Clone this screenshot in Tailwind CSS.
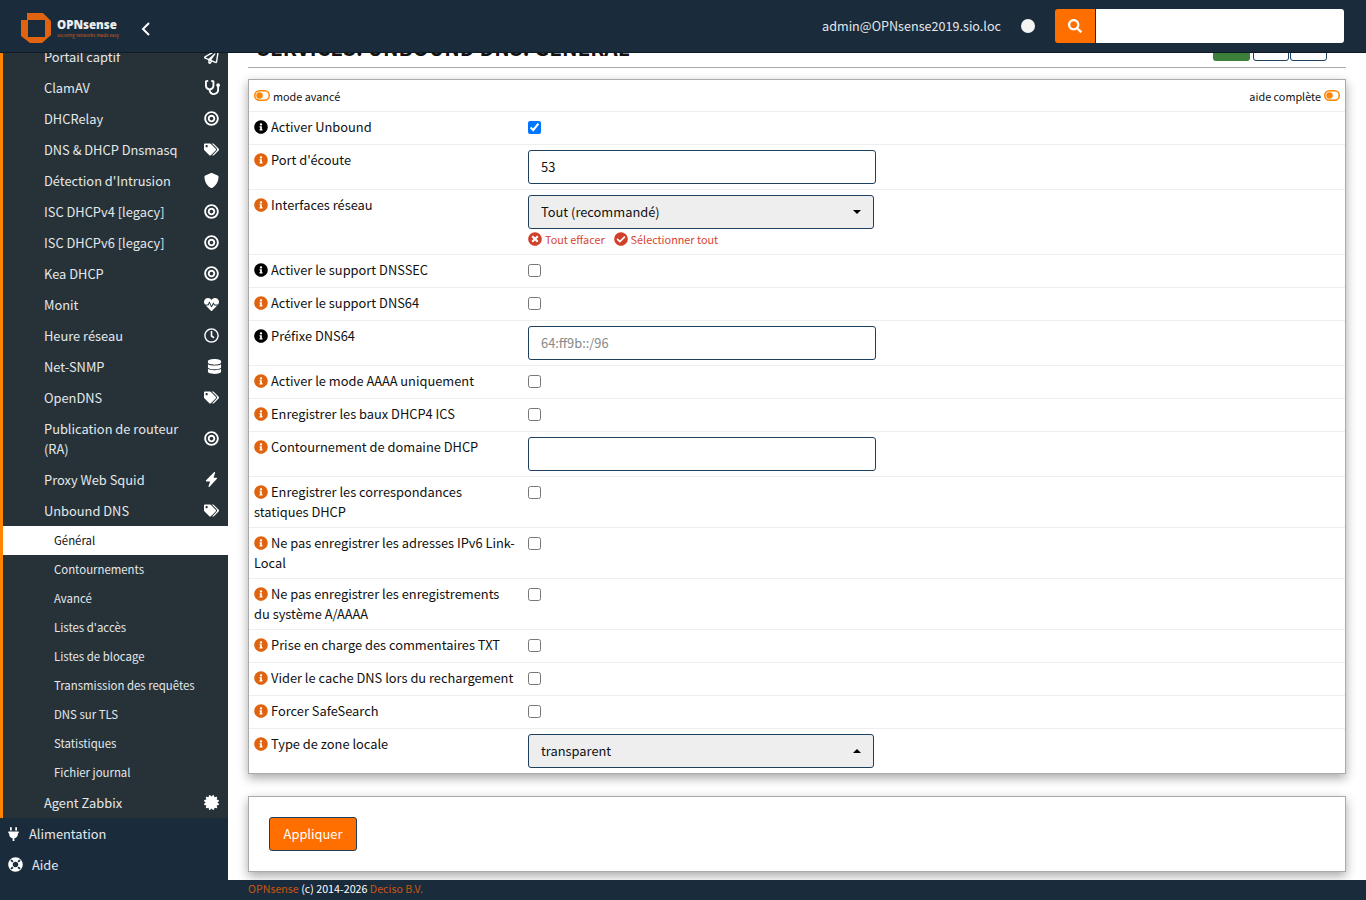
<!DOCTYPE html>
<html lang="fr">
<head>
    <meta charset="UTF-8">
    <title>Services: Unbound DNS: Général</title>
    <script src="https://cdn.jsdelivr.net/npm/@tailwindcss/browser@4"></script>
</head>
<body class="h-[900px] overflow-hidden bg-white text-[12.85px] leading-[20px] text-[#111] font-['Noto_Sans_CJK_SC',sans-serif]">
    <!-- icon sprite -->
    <svg class="hidden">
        <symbol id="i-plane" viewBox="0 0 512 512"><path d="M440 6.5L24 246.4c-34.4 19.9-31.1 70.8 5.7 85.9L144 379.6V464c0 46.4 59.2 65.5 86.6 28.6l43.8-59.1 111.9 46.2c5.9 2.4 12.1 3.6 18.3 3.6 8.2 0 16.3-2.1 23.6-6.2 12.8-7.2 21.6-20 23.9-34.5l59.4-387.2c6.1-40.1-36.9-68.8-71.5-48.9zM192 464v-64.6l36.6 15.1L192 464zm212.6-28.7l-153.8-63.5L391 169.5c10.7-15.5-9.5-33.5-23.7-21.2L155.8 332.6 48 288 464 48l-59.4 387.3z"/></symbol>
        <symbol id="i-steth" viewBox="0 0 512 512"><path d="M447.1 112c-34.2.5-62.3 28.4-63 62.6-.5 24.3 12.5 45.6 32 56.8V344c0 57.3-50.2 104-112 104-60 0-109.2-44.1-111.9-99.2C265 333.8 320 269.2 320 192V36.6c0-11.4-8.1-21.3-19.3-23.5L237.8.5c-13-2.6-25.6 5.8-28.2 18.8L206.4 35c-2.6 13 5.8 25.6 18.8 28.2l30.7 6.1v121.4c0 52.9-42.2 96.7-95.1 97.2-53.4.5-96.9-42.7-96.9-96V69.4l30.7-6.1c13-2.6 21.4-15.2 18.8-28.2l-3.1-15.7C107.7 6.4 95.1-2 82.1.6L19.3 13C8.1 15.3 0 25.1 0 36.6V192c0 77.3 55.1 142 128.1 156.8C130.7 439.2 208.6 512 304 512c97 0 176-75.4 176-168V231.4c19.1-11.1 32-31.7 32-55.4 0-35.7-29.2-64.5-64.9-64z"/></symbol>
        <symbol id="i-bullseye" viewBox="0 0 496 512"><path d="M248 8C111.03 8 0 119.03 0 256s111.03 248 248 248 248-111.03 248-248S384.97 8 248 8zm0 432c-101.69 0-184-82.29-184-184 0-101.69 82.29-184 184-184 101.69 0 184 82.29 184 184 0 101.69-82.29 184-184 184zm0-312c-70.69 0-128 57.31-128 128s57.31 128 128 128 128-57.31 128-128-57.31-128-128-128zm0 192c-35.29 0-64-28.71-64-64s28.71-64 64-64 64 28.71 64 64-28.71 64-64 64z"/></symbol>
        <symbol id="i-tags" viewBox="0 0 640 512"><path d="M497.941 225.941L286.059 14.059A48 48 0 0 0 252.118 0H48C21.49 0 0 21.49 0 48v204.118a48 48 0 0 0 14.059 33.941l211.882 211.882c18.744 18.745 49.136 18.746 67.882 0l204.118-204.118c18.745-18.745 18.745-49.137 0-67.882zM112 160c-26.51 0-48-21.49-48-48s21.49-48 48-48 48 21.49 48 48-21.49 48-48 48zm513.941 133.823L421.823 497.941c-18.745 18.745-49.137 18.745-67.882 0l-.36-.36L527.64 323.522c16.999-16.999 26.36-39.6 26.36-63.64s-9.362-46.641-26.36-63.64L331.397 0h48.721a48 48 0 0 1 33.941 14.059l211.882 211.882c18.745 18.745 18.745 49.137 0 67.882z"/></symbol>
        <symbol id="i-shield" viewBox="0 0 512 512"><path d="M466.5 83.7l-192-80a48.15 48.15 0 0 0-36.9 0l-192 80C27.7 91.1 16 108.6 16 128c0 198.5 114.5 335.7 221.5 380.3 11.8 4.9 25.1 4.9 36.9 0C360.1 472.6 496 349.3 496 128c0-19.4-11.7-36.9-29.5-44.3z"/></symbol>
        <symbol id="i-heart" viewBox="0 0 512 512"><path d="M320.2 243.8l-49.7 99.4c-6 12.1-23.4 11.7-28.9-.6l-56.9-126.3-30 71.7H60.6l182.5 186.5c7.1 7.3 18.6 7.3 25.7 0L451.4 288H342.3l-22.1-44.2zM473.7 73.9l-2.4-2.5c-51.5-52.6-135.8-52.6-187.4 0L256 100l-27.9-28.5c-51.5-52.7-135.9-52.7-187.4 0l-2.4 2.4C-10.4 123.7-12.5 203 31 256h102.4l35.9-86.2c5.4-12.9 23.6-13.2 29.4-.4l58.2 129.3 49-97.9c5.9-11.8 22.7-11.8 28.6 0l27.6 55.2H481c43.5-53 41.4-132.3-7.3-182.1z"/></symbol>
        <symbol id="i-clock" viewBox="0 0 512 512"><path d="M256 8C119 8 8 119 8 256s111 248 248 248 248-111 248-248S393 8 256 8zm0 448c-110.5 0-200-89.5-200-200S145.5 56 256 56s200 89.5 200 200-89.5 200-200 200zm61.8-104.4l-84.9-61.7c-3.1-2.3-4.9-5.9-4.9-9.7V116c0-6.6 5.4-12 12-12h32c6.6 0 12 5.4 12 12v141.7l66.8 48.6c5.4 3.9 6.5 11.4 2.6 16.8L334.6 349c-3.9 5.3-11.4 6.5-16.8 2.6z"/></symbol>
        <symbol id="i-db" viewBox="0 0 448 512"><path d="M448 73.143v45.714C448 159.143 347.667 192 224 192S0 159.143 0 118.857V73.143C0 32.857 100.333 0 224 0s224 32.857 224 73.143zM448 176v102.857C448 319.143 347.667 352 224 352S0 319.143 0 278.857V176c48.125 33.143 136.208 48.572 224 48.572S399.874 209.143 448 176zm0 160v102.857C448 479.143 347.667 512 224 512S0 479.143 0 438.857V336c48.125 33.143 136.208 48.572 224 48.572S399.874 369.143 448 336z"/></symbol>
        <symbol id="i-bolt" viewBox="0 0 384 512"><path d="M296 0c14 0 24 13 20 27L262 192h98c20 0 31 23 18 38L125 505c-15 15-40 1-34-20l54-165H24c-20 0-31-23-18-38L277 8c5-5 12-8 19-8z"/></symbol>
        <symbol id="i-cert" viewBox="0 0 512 512"><path d="M458.622 255.92l45.985-45.005c13.708-12.977 7.316-36.039-10.664-40.339l-62.65-15.99 17.661-62.015c4.991-17.838-11.829-34.663-29.661-29.671l-61.994 17.667-15.984-62.671C337.085.197 313.765-6.276 301.079 7.228L256 53.57 210.921 7.229c-12.58-13.391-36.04-7.186-40.236 10.668l-15.984 62.671-61.995-17.667C74.87 57.907 58.056 74.738 63.046 92.572l17.661 62.015-62.65 15.99C.069 174.878-6.31 197.944 7.392 210.915l45.985 45.005-45.985 45.004c-13.708 12.977-7.316 36.039 10.664 40.339l62.65 15.99-17.661 62.015c-4.991 17.838 11.829 34.663 29.661 29.671l61.994-17.667 15.984 62.671c4.439 18.575 27.696 24.018 40.237 10.668L256 458.61l45.079 46.343c12.381 13.523 35.728 7.929 40.237-10.668l15.984-62.671 61.994 17.667c17.833 4.992 34.652-11.837 29.661-29.671l-17.661-62.015 62.65-15.99c17.98-4.3 24.371-27.362 10.664-40.339l-45.986-45.006z"/></symbol>
        <symbol id="i-plug" viewBox="0 0 384 512"><path d="M320,32a32,32,0,0,0-64,0v96h64Zm48,128H16A16,16,0,0,0,0,176v32a16,16,0,0,0,16,16H32v32A160.07,160.07,0,0,0,160,412.8V512h64V412.8A160.07,160.07,0,0,0,352,256V224h16a16,16,0,0,0,16-16V176A16,16,0,0,0,368,160ZM128,32a32,32,0,0,0-64,0v96h64Z"/></symbol>
        <symbol id="i-ring" viewBox="0 0 512 512"><path d="M256 8C119.033 8 8 119.033 8 256s111.033 248 248 248 248-111.033 248-248S392.967 8 256 8zm173.696 119.559l-63.399 63.399c-10.987-18.559-26.67-34.252-45.255-45.255l63.399-63.399a218.396 218.396 0 0 1 45.255 45.255zM256 352c-53.019 0-96-42.981-96-96s42.981-96 96-96 96 42.981 96 96-42.981 96-96 96zM127.559 82.304l63.399 63.399c-18.559 10.987-34.252 26.67-45.255 45.255l-63.399-63.399a218.372 218.372 0 0 1 45.255-45.255zM82.304 384.441l63.399-63.399c10.987 18.559 26.67 34.252 45.255 45.255l-63.399 63.399a218.396 218.396 0 0 1-45.255-45.255zm302.137 45.255l-63.399-63.399c18.559-10.987 34.252-26.67 45.255-45.255l63.399 63.399a218.403 218.403 0 0 1-45.255 45.255z"/></symbol>
        <symbol id="i-search" viewBox="0 0 512 512"><path d="M505 442.7L405.3 343c-4.5-4.5-10.6-7-17-7H372c27.6-35.3 44-79.7 44-128C416 93.1 322.9 0 208 0S0 93.1 0 208s93.1 208 208 208c48.3 0 92.7-16.4 128-44v16.3c0 6.4 2.5 12.5 7 17l99.7 99.7c9.4 9.4 24.6 9.4 33.9 0l28.3-28.3c9.4-9.4 9.4-24.6.1-34zM208 336c-70.7 0-128-57.2-128-128 0-70.7 57.2-128 128-128 70.7 0 128 57.2 128 128 0 70.7-57.2 128-128 128z"/></symbol>
        <symbol id="i-info" viewBox="0 0 512 512"><path d="M256 8C119.043 8 8 119.083 8 256c0 136.997 111.043 248 248 248s248-111.003 248-248C504 119.083 392.957 8 256 8zm0 110c23.196 0 42 18.804 42 42s-18.804 42-42 42-42-18.804-42-42 18.804-42 42-42zm56 254c0 6.627-5.373 12-12 12h-88c-6.627 0-12-5.373-12-12v-24c0-6.627 5.373-12 12-12h12v-64h-12c-6.627 0-12-5.373-12-12v-24c0-6.627 5.373-12 12-12h64c6.627 0 12 5.373 12 12v100h12c6.627 0 12 5.373 12 12v24z"/></symbol>
        <symbol id="i-times" viewBox="0 0 512 512"><path d="M256 8C119 8 8 119 8 256s111 248 248 248 248-111 248-248S393 8 256 8zm121.6 313.1c4.7 4.7 4.7 12.3 0 17L338 377.6c-4.7 4.7-12.3 4.7-17 0L256 312l-65.1 65.6c-4.7 4.7-12.3 4.7-17 0L134.4 338c-4.7-4.7-4.7-12.3 0-17l65.6-65-65.6-65.1c-4.7-4.7-4.7-12.3 0-17l39.6-39.6c4.7-4.7 12.3-4.7 17 0l65 65.7 65.1-65.6c4.7-4.7 12.3-4.7 17 0l39.6 39.6c4.7 4.7 4.7 12.3 0 17L312 256l65.6 65.1z"/></symbol>
        <symbol id="i-check" viewBox="0 0 512 512"><path d="M504 256c0 136.967-111.033 248-248 248S8 392.967 8 256 119.033 8 256 8s248 111.033 248 248zM227.314 387.314l184-184c6.248-6.248 6.248-16.379 0-22.627l-22.627-22.627c-6.248-6.249-16.379-6.249-22.628 0L216 308.118l-70.059-70.059c-6.248-6.248-16.379-6.248-22.628 0l-22.627 22.627c-6.248 6.248-6.248 16.379 0 22.627l104 104c6.249 6.249 16.379 6.249 22.628.001z"/></symbol>
        <symbol id="i-toggle" viewBox="0 0 16 11"><rect x="0.75" y="0.75" width="14.5" height="9.5" rx="4.75" fill="none" stroke="currentColor" stroke-width="1.5"/><circle cx="5.5" cy="5.5" r="3.2" fill="currentColor"/></symbol>
    </svg>

    <div class="flex h-[900px] flex-col">
        <!-- top bar -->
        <header class="relative z-10 flex h-[53px] shrink-0 items-center border-b border-[#0e1a24] bg-[#1a2b3b] pr-[22px]">
            <div class="mt-[4px] flex w-[228px] items-center pl-[21px]">
                <svg class="h-[30px] w-[30px] shrink-0" viewBox="0 0 30 30"><path fill="#e0640f" fill-rule="evenodd" d="M6 0h16l8 8v14l-9 8H9l-9-7V7h6zM7 7v17h17V7z"/></svg>
                <div class="ml-[6px] flex w-[64px] flex-col">
                    <span class="text-[11.5px] leading-[13px] font-extrabold text-[#eee] font-['Open_Sans',sans-serif]">OPNsense</span>
                    <span class="mt-[1px] whitespace-nowrap text-[4.5px] leading-[6px] text-[#c9601a]">securing networks made easy</span>
                </div>
                <svg class="mt-[1px] ml-[20px] h-[14px] w-[9px]" viewBox="0 0 9 14" fill="none" stroke="#fff" stroke-width="2"><path d="M8 1 2 7l6 6"/></svg>
            </div>
            <div class="ml-auto flex items-center">
                <span class="text-[12.6px] text-[#e4e8eb]">admin@OPNsense2019.sio.loc</span>
                <span class="ml-[20px] h-[14px] w-[14px] rounded-full bg-[#f5f5f5]"></span>
                <span class="ml-[20px] flex h-[34px] w-[40px] items-center justify-center rounded-l-[3px] bg-[#ff6f00]">
                    <svg class="h-[14px] w-[14px] fill-white"><use href="#i-search"/></svg>
                </span>
                <input type="text" class="ml-px h-[34px] w-[248px] rounded-r-[3px] bg-white">
            </div>
        </header>

        <div class="flex min-h-0 flex-1">
            <!-- sidebar -->
            <aside class="flex w-[228px] shrink-0 flex-col overflow-hidden bg-[#1a2b3b] text-[#e4e8eb]">
                <nav id="services" class="-mt-[12px] border-l-[3px] border-[#ff8400] bg-[#263238]"></nav>
                <a class="flex h-[31px] items-center pl-[8px]">
                    <svg class="h-[14px] w-[11px] fill-white"><use href="#i-plug"/></svg>
                    <span class="ml-[10px]">Alimentation</span>
                </a>
                <a class="flex h-[31px] items-center pl-[8px]">
                    <svg class="h-[15px] w-[15px] fill-white"><use href="#i-ring"/></svg>
                    <span class="ml-[9px]">Aide</span>
                </a>
            </aside>

            <!-- page content -->
            <main class="min-w-0 flex-1 overflow-hidden px-[20px]">
                <div class="-mt-[14px] flex h-[29px] items-end justify-between border-b border-[#aaa] pl-[9px] pr-[19px]">
                    <h1 class="mb-[8px] text-[20.8px] leading-[24px] font-bold text-[#111] uppercase">Services: Unbound DNS: Général</h1>
                    <div class="mb-[6px] flex">
                        <span class="h-[20px] w-[37px] rounded-b-[3px] bg-[#3b7f3a]"></span>
                        <span class="ml-[3px] h-[20px] w-[36px] rounded-b-[3px] border border-[#1d4060]"></span>
                        <span class="ml-px h-[20px] w-[37px] rounded-b-[3px] border border-[#1d4060]"></span>
                    </div>
                </div>

                <section id="panel" class="mt-[11px] border border-[#aaa] shadow-[0_4px_10px_rgba(0,0,0,0.35)]">
                    <div class="flex h-[32px] items-center justify-between border-b border-[#eee] pl-[5px] pr-[5px] text-[10.83px]">
                        <span class="flex items-center"><svg class="h-[11px] w-[16px] text-[#ff8400]"><use href="#i-toggle"/></svg><span class="ml-[3px]">mode avancé</span></span>
                        <span class="flex items-center"><span class="mr-[3px]">aide complète</span><svg class="h-[11px] w-[16px] text-[#ff8400]"><use href="#i-toggle"/></svg></span>
                    </div>
                    <div id="rows"></div>
                </section>

                <section class="mt-[22px] h-[76px] border border-[#aaa] p-[20px] shadow-[0_4px_10px_rgba(0,0,0,0.35)]">
                    <button class="h-[34px] w-[88px] rounded-[3px] border border-[#1d4060] bg-[#ff6f00] text-white">Appliquer</button>
                </section>
            </main>
        </div>

        <footer class="h-[20px] shrink-0 bg-[#1a2b3b] pl-[248px] text-[10.7px] leading-[18px] text-white">
            <span class="text-[#c9560f]">OPNsense</span> (c) 2014-2026 <span class="text-[#c9560f]">Deciso B.V.</span>
        </footer>
    </div>

    <script>
        const services = [
            ["Portail captif", "i-plane"],
            ["ClamAV", "i-steth"],
            ["DHCRelay", "i-bullseye"],
            ["DNS & DHCP Dnsmasq", "i-tags"],
            ["Détection d'Intrusion", "i-shield"],
            ["ISC DHCPv4 [legacy]", "i-bullseye"],
            ["ISC DHCPv6 [legacy]", "i-bullseye"],
            ["Kea DHCP", "i-bullseye"],
            ["Monit", "i-heart"],
            ["Heure réseau", "i-clock"],
            ["Net-SNMP", "i-db"],
            ["OpenDNS", "i-tags"],
            ["Publication de routeur (RA)", "i-bullseye"],
            ["Proxy Web Squid", "i-bolt"],
            ["Unbound DNS", "i-tags"]
        ];
        const unboundPages = ["Général", "Contournements", "Avancé", "Listes d'accès", "Listes de blocage",
            "Transmission des requêtes", "DNS sur TLS", "Statistiques", "Fichier journal"];

        function serviceRow(name, icon) {
            let offset = "mr-[9px]";
            if (icon === "i-db") offset = "mr-[6px]";
            if (icon === "i-steth") offset = "mr-[8px]";
            return `<a class="flex min-h-[31px] items-center justify-between py-[5.5px] pl-[41px]">
                <span class="w-[150px]">${name}</span>
                <svg class="h-[15px] w-[15px] fill-white ${offset}"><use href="#${icon}"/></svg>
            </a>`;
        }

        const nav = document.getElementById("services");
        let navHtml = services.map(s => serviceRow(s[0], s[1])).join("");
        unboundPages.forEach((page, i) => {
            const active = i === 0 ? "bg-white text-[#111]" : "";
            navHtml += `<a class="flex h-[29px] items-center pb-[2px] pl-[51px] text-[11.4px] ${active}">${page}</a>`;
        });
        navHtml += serviceRow("Agent Zabbix", "i-cert");
        nav.innerHTML = navHtml;

        // [label, help icon is black?, control]
        const rows = [
            ["Activer Unbound", true, "checked"],
            ["Port d'écoute", false, "port"],
            ["Interfaces réseau", false, "interfaces"],
            ["Activer le support DNSSEC", true, "check"],
            ["Activer le support DNS64", false, "check"],
            ["Préfixe DNS64", true, "prefix"],
            ["Activer le mode AAAA uniquement", false, "check"],
            ["Enregistrer les baux DHCP4 ICS", false, "check"],
            ["Contournement de domaine DHCP", false, "empty"],
            ["Enregistrer les correspondances statiques DHCP", false, "check"],
            ["Ne pas enregistrer les adresses IPv6 Link-Local", false, "check"],
            ["Ne pas enregistrer les enregistrements du système A/AAAA", false, "check"],
            ["Prise en charge des commentaires TXT", false, "check"],
            ["Vider le cache DNS lors du rechargement", false, "check"],
            ["Forcer SafeSearch", false, "check"],
            ["Type de zone locale", false, "zone"]
        ];

        function textInput(value, placeholder) {
            return `<input type="text" value="${value}" placeholder="${placeholder}" class="block h-[34px] w-[348px] rounded-[3px] border border-[#1d4060] bg-white px-[12px] pb-[2px] placeholder:text-[#888]">`;
        }

        function selectBox(text, up) {
            const caret = up ? "border-b-[4px] border-b-black" : "border-t-[4px] border-t-black";
            return `<div class="flex h-[34px] w-[346px] items-center justify-between rounded-[3px] border border-[#1d4060] bg-[#eee] pl-[12px] pr-[12px]">
                <span>${text}</span><span class="h-0 w-0 border-x-[4px] border-x-transparent ${caret}"></span>
            </div>`;
        }

        function control(type) {
            if (type === "checked") return `<div class="h-[22px] pt-[4px]"><input class="block" type="checkbox" checked></div>`;
            if (type === "check") return `<div class="h-[22px] pt-[4px]"><input class="block" type="checkbox"></div>`;
            if (type === "port") return textInput("53", "");
            if (type === "prefix") return textInput("", "64:ff9b::/96");
            if (type === "empty") return textInput("", "");
            if (type === "zone") return selectBox("transparent", true);
            return selectBox("Tout (recommandé)", false) + `
                <div class="mt-px mb-px flex h-[18px] items-center text-[10.83px] text-[#d9432f]">
                    <svg class="h-[14px] w-[14px] fill-[#d0402a]"><use href="#i-times"/></svg><span class="ml-[3px]">Tout effacer</span>
                    <svg class="ml-[9px] h-[14px] w-[14px] fill-[#d0402a]"><use href="#i-check"/></svg><span class="ml-[3px]">Sélectionner tout</span>
                </div>`;
        }

        document.getElementById("rows").innerHTML = rows.map((row, i) => {
            const iconColor = row[1] ? "fill-black" : "fill-[#e0640f]";
            const divider = i === rows.length - 1 ? "" : "border-b border-[#eee]";
            return `<div class="grid grid-cols-[274px_1fr] py-[5px] pl-[5px] ${divider}">
                <div class="pr-[11px]"><svg class="mr-[3px] inline h-[14px] w-[14px] align-[-2px] ${iconColor}"><use href="#i-info"/></svg>${row[0]}</div>
                <div>${control(row[2])}</div>
            </div>`;
        }).join("");
    </script>
</body>
</html>
